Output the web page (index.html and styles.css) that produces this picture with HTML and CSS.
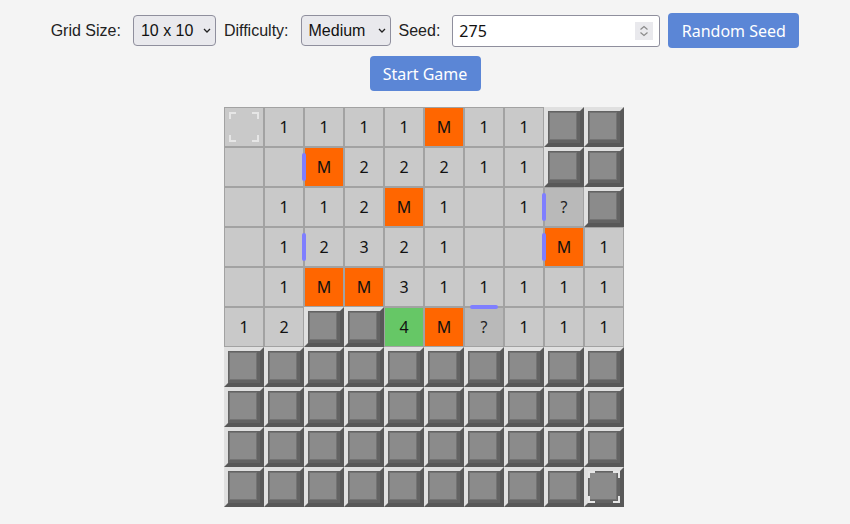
FILE: index.html
```html
<!DOCTYPE html>
<html lang="en">
<head>
<meta charset="utf-8">
<title>Minesweeper</title>
<link rel="stylesheet" href="styles.css">
</head>
<body>
<div class="app">
  <div class="controls">
    <label class="lbl" for="size">Grid Size:</label>
    <select id="size" class="sel sel-size"><option>10 x 10</option></select>
    <label class="lbl" for="diff">Difficulty:</label>
    <select id="diff" class="sel sel-diff"><option>Medium</option></select>
    <label class="lbl" for="seed">Seed:</label>
    <span class="seed-wrap">
      <input id="seed" class="seed" type="text" value="275">
      <span class="spin"><svg width="18" height="18" viewBox="0 0 18 18"><path d="M5.5 7.5 L9 4.5 L12.5 7.5" fill="none" stroke="#8a8a8a" stroke-width="1.2"/><path d="M5.5 10.5 L9 13.5 L12.5 10.5" fill="none" stroke="#8a8a8a" stroke-width="1.2"/></svg></span>
    </span>
    <button class="btn">Random Seed</button>
  </div>
  <button class="btn start">Start Game</button>
  <div class="board">
    <div class="c r"><span class="focus"><i class="tl"></i><i class="tr"></i><i class="bl"></i><i class="br"></i></span></div>
    <div class="c r">1</div><div class="c r">1</div><div class="c r">1</div><div class="c r">1</div>
    <div class="c r m">M</div><div class="c r">1</div><div class="c r">1</div>
    <div class="c u"><span class="face"></span></div><div class="c u"><span class="face"></span></div>

    <div class="c r"></div><div class="c r"></div><div class="c r m">M</div><div class="c r">2</div><div class="c r">2</div>
    <div class="c r">2</div><div class="c r">1</div><div class="c r">1</div>
    <div class="c u"><span class="face"></span></div><div class="c u"><span class="face"></span></div>

    <div class="c r"></div><div class="c r">1</div><div class="c r">1</div><div class="c r">2</div><div class="c r m">M</div>
    <div class="c r">1</div><div class="c r"></div><div class="c r">1</div><div class="c r q">?</div>
    <div class="c u"><span class="face"></span></div>

    <div class="c r"></div><div class="c r">1</div><div class="c r">2</div><div class="c r">3</div><div class="c r">2</div>
    <div class="c r">1</div><div class="c r"></div><div class="c r"></div><div class="c r m">M</div><div class="c r">1</div>

    <div class="c r"></div><div class="c r">1</div><div class="c r m">M</div><div class="c r m">M</div><div class="c r">3</div>
    <div class="c r">1</div><div class="c r">1</div><div class="c r">1</div><div class="c r">1</div><div class="c r">1</div>

    <div class="c r">1</div><div class="c r">2</div>
    <div class="c u"><span class="face"></span></div><div class="c u"><span class="face"></span></div>
    <div class="c r g">4</div><div class="c r m">M</div><div class="c r q">?</div>
    <div class="c r">1</div><div class="c r">1</div><div class="c r">1</div>

    <div class="c u"><span class="face"></span></div><div class="c u"><span class="face"></span></div><div class="c u"><span class="face"></span></div><div class="c u"><span class="face"></span></div><div class="c u"><span class="face"></span></div>
    <div class="c u"><span class="face"></span></div><div class="c u"><span class="face"></span></div><div class="c u"><span class="face"></span></div><div class="c u"><span class="face"></span></div><div class="c u"><span class="face"></span></div>

    <div class="c u"><span class="face"></span></div><div class="c u"><span class="face"></span></div><div class="c u"><span class="face"></span></div><div class="c u"><span class="face"></span></div><div class="c u"><span class="face"></span></div>
    <div class="c u"><span class="face"></span></div><div class="c u"><span class="face"></span></div><div class="c u"><span class="face"></span></div><div class="c u"><span class="face"></span></div><div class="c u"><span class="face"></span></div>

    <div class="c u"><span class="face"></span></div><div class="c u"><span class="face"></span></div><div class="c u"><span class="face"></span></div><div class="c u"><span class="face"></span></div><div class="c u"><span class="face"></span></div>
    <div class="c u"><span class="face"></span></div><div class="c u"><span class="face"></span></div><div class="c u"><span class="face"></span></div><div class="c u"><span class="face"></span></div><div class="c u"><span class="face"></span></div>

    <div class="c u"><span class="face"></span></div><div class="c u"><span class="face"></span></div><div class="c u"><span class="face"></span></div><div class="c u"><span class="face"></span></div><div class="c u"><span class="face"></span></div>
    <div class="c u"><span class="face"></span></div><div class="c u"><span class="face"></span></div><div class="c u"><span class="face"></span></div><div class="c u"><span class="face"></span></div>
    <div class="c u"><span class="face"></span><span class="focus"><i class="tl"></i><i class="tr"></i><i class="bl"></i><i class="br"></i></span></div>

    <span class="wall v" style="left:78px;top:46px"></span>
    <span class="wall v" style="left:78px;top:126px"></span>
    <span class="wall v" style="left:318px;top:86px"></span>
    <span class="wall v" style="left:318px;top:126px"></span>
    <span class="wall h" style="left:246px;top:198px"></span>
  </div>
</div>
</body>
</html>
```

FILE: styles.css
```css
* { box-sizing: border-box; }
html, body { margin: 0; padding: 0; }
body {
  background: #f4f4f4;
  font-family: "Liberation Sans", Arial, sans-serif;
  color: #222;
}
.app {
  display: flex;
  flex-direction: column;
  align-items: center;
  padding-top: 13px;
}
.controls {
  display: flex;
  align-items: center;
  gap: 8px;
  height: 35px;
}
.lbl {
  font-size: 16px;
  margin-right: 4px;
  color: #222;
}
.sel {
  -webkit-appearance: none;
  appearance: none;
  height: 31px;
  border: 1px solid #8f8f9d;
  border-radius: 4px;
  background-color: #e9e9ed;
  background-image: url("data:image/svg+xml;utf8,<svg xmlns='http://www.w3.org/2000/svg' width='8' height='5' viewBox='0 0 8 5'><path d='M1 1 L4 4 L7 1' fill='none' stroke='%23222' stroke-width='1.3'/></svg>");
  background-repeat: no-repeat;
  background-position: right 4px center;
  font-family: "Liberation Sans", Arial, sans-serif;
  font-size: 16px;
  color: #111;
  padding: 0 0 0 7px;
}
.sel-size { width: 83px; }
.sel-diff { width: 90px; }
.seed-wrap {
  position: relative;
  display: block;
  width: 208px;
  height: 32px;
}
.seed {
  width: 208px;
  height: 32px;
  border: 1px solid #8f8f9d;
  border-radius: 3px;
  background: #fff;
  font-family: "Noto Sans", "Open Sans", sans-serif;
  font-size: 16px;
  color: #111;
  padding: 0 6px;
  outline: none;
}
.spin {
  position: absolute;
  left: 183px;
  top: 7px;
  width: 18px;
  height: 18px;
  background: #e9e9ed;
  display: block;
}
.spin svg { display: block; }
.btn {
  height: 35px;
  border: 0;
  border-radius: 4px;
  background: #5b86d6;
  color: #fff;
  font-family: "Noto Sans", "Open Sans", sans-serif;
  font-size: 16px;
  padding: 0;
}
.controls .btn { width: 131px; }
.start {
  margin-top: 8px;
  width: 111px;
}
.board {
  margin-top: 16px;
  margin-right: 2px;
  position: relative;
  display: grid;
  grid-template-columns: repeat(10, 40px);
  grid-auto-rows: 40px;
}
.c {
  position: relative;
  width: 40px;
  height: 40px;
  display: flex;
  align-items: center;
  justify-content: center;
  font-family: "Noto Sans", "Open Sans", sans-serif;
  font-size: 16px;
  color: #111;
}
.r {
  background: #c9c9c9;
  border: 1px solid #a2a2a2;
}
.m { background: #ff6600; }
.g { background: #66c766; }
.q { background: #b9b9b9; color: #222; }
.u {
  border-style: solid;
  border-width: 4px;
  border-color: #e0e0e0 #585858 #585858 #e0e0e0;
  background: #636363;
  align-items: flex-start;
  justify-content: flex-start;
}
.face {
  display: block;
  width: 28px;
  height: 28px;
  margin: 1px 0 0 1px;
  background: #8b8b8b;
  border: 1px solid #737373;
}
.focus {
  position: absolute;
  inset: 4px;
  pointer-events: none;
}
.u .focus { inset: 0; }
.focus i {
  position: absolute;
  width: 7px;
  height: 7px;
  border-color: #e6e6e6;
  border-style: solid;
  border-width: 0;
}
.focus .tl { left: 0; top: 0; border-left-width: 2px; border-top-width: 2px; }
.focus .tr { right: 0; top: 0; border-right-width: 2px; border-top-width: 2px; }
.focus .bl { left: 0; bottom: 0; border-left-width: 2px; border-bottom-width: 2px; }
.focus .br { right: 0; bottom: 0; border-right-width: 2px; border-bottom-width: 2px; }
.wall {
  position: absolute;
  background: #7f7fff;
  border-radius: 2px;
}
.wall.v { width: 4px; height: 28px; }
.wall.h { width: 28px; height: 4px; }
```
